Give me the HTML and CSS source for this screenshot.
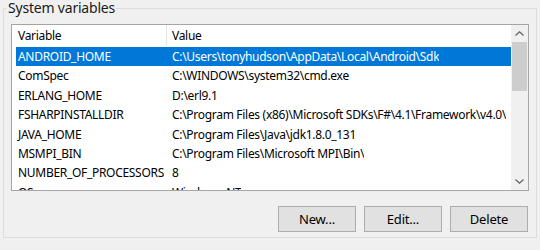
FILE: index.html
```html
<!DOCTYPE html>
<html>
<head>
	<title>System variables</title>
	<link rel="stylesheet" href="styles.css">
</head>
<body>
	<fieldset class="group">
		<legend>System variables</legend>
		<div class="list">
			<div class="table">
				<div class="header">
					<div class="col-name">Variable</div>
					<div class="col-value">Value</div>
				</div>
				<div class="row selected">
					<div class="col-name">ANDROID_HOME</div>
					<div class="col-value">C:\Users\tonyhudson\AppData\Local\Android\Sdk</div>
				</div>
				<div class="row">
					<div class="col-name">ComSpec</div>
					<div class="col-value">C:\WINDOWS\system32\cmd.exe</div>
				</div>
				<div class="row">
					<div class="col-name">ERLANG_HOME</div>
					<div class="col-value">D:\erl9.1</div>
				</div>
				<div class="row">
					<div class="col-name">FSHARPINSTALLDIR</div>
					<div class="col-value">C:\Program Files (x86)\Microsoft SDKs\F#\4.1\Framework\v4.0\</div>
				</div>
				<div class="row">
					<div class="col-name">JAVA_HOME</div>
					<div class="col-value">C:\Program Files\Java\jdk1.8.0_131</div>
				</div>
				<div class="row">
					<div class="col-name">MSMPI_BIN</div>
					<div class="col-value">C:\Program Files\Microsoft MPI\Bin\</div>
				</div>
				<div class="row">
					<div class="col-name">NUMBER_OF_PROCESSORS</div>
					<div class="col-value">8</div>
				</div>
				<div class="row">
					<div class="col-name">OS</div>
					<div class="col-value">Windows_NT</div>
				</div>
			</div>
			<div class="scrollbar">
				<div class="arrow">
					<svg width="9" height="5" viewBox="0 0 9 5"><path d="M0.5 4.5 L4.5 0.8 L8.5 4.5" fill="none" stroke="#606060" stroke-width="1.2"/></svg>
				</div>
				<div class="track">
					<div class="thumb"></div>
				</div>
				<div class="arrow">
					<svg width="9" height="5" viewBox="0 0 9 5"><path d="M0.5 0.5 L4.5 4.2 L8.5 0.5" fill="none" stroke="#606060" stroke-width="1.2"/></svg>
				</div>
			</div>
		</div>
		<div class="buttons">
			<button class="btn">New...</button>
			<button class="btn">Edit...</button>
			<button class="btn">Delete</button>
		</div>
	</fieldset>
</body>
</html>
```

FILE: styles.css
```css
body {
	margin: 0;
	background-color: #f0f0f0;
	font-family: 'Noto Sans', sans-serif;
	font-size: 12px;
	letter-spacing: -0.3px;
	color: #000;
}
.group {
	margin: 0 3px;
	padding: 8px 8px 13px 7px;
	border: 1px solid #dcdcdc;
	height: 238px;
	box-sizing: border-box;
	min-width: 0;
}
.group legend {
	padding: 0 1px;
	margin-left: -4px;
	line-height: 16px;
	font-size: 14px;
	letter-spacing: -0.2px;
	color: #1a1a1a;
}
.list {
	display: flex;
	width: 518px;
	height: 167px;
	box-sizing: border-box;
	border: 1px solid #a5a5a5;
	background-color: #fff;
	overflow: hidden;
}
.table {
	flex: 1;
	overflow: hidden;
	white-space: nowrap;
}
.header {
	display: flex;
	height: 21px;
	line-height: 21px;
	margin-bottom: 1px;
}
.header .col-name {
	flex-shrink: 0;
	width: 148px;
	padding-left: 6px;
	border-right: 1px solid #e5e5e5;
}
.header .col-value {
	padding-left: 5px;
}
.row {
	display: flex;
	height: 19.4px;
	line-height: 19.4px;
	margin-left: 4px;
}
.row .col-name {
	flex-shrink: 0;
	width: 148px;
	padding-left: 2px;
	overflow: hidden;
}
.row .col-value {
	padding-left: 6px;
	overflow: hidden;
}
.selected {
	background-color: #0078d7;
	color: #fff;
}
.scrollbar {
	width: 17px;
	display: flex;
	flex-direction: column;
	background-color: #f0f0f0;
}
.arrow {
	height: 17px;
	display: flex;
	align-items: center;
	justify-content: center;
}
.track {
	flex: 1;
	padding: 0 1px;
}
.thumb {
	height: 49px;
	background-color: #cdcdcd;
}
.buttons {
	display: flex;
	justify-content: flex-end;
	gap: 8px;
	width: 517px;
	margin-top: 15px;
}
.btn {
	width: 78px;
	height: 26px;
	background-color: #e1e1e1;
	border: 1px solid #adadad;
	font-family: 'Noto Sans', sans-serif;
	font-size: 13px;
	letter-spacing: -0.2px;
	color: #000;
	padding: 0;
}
```
